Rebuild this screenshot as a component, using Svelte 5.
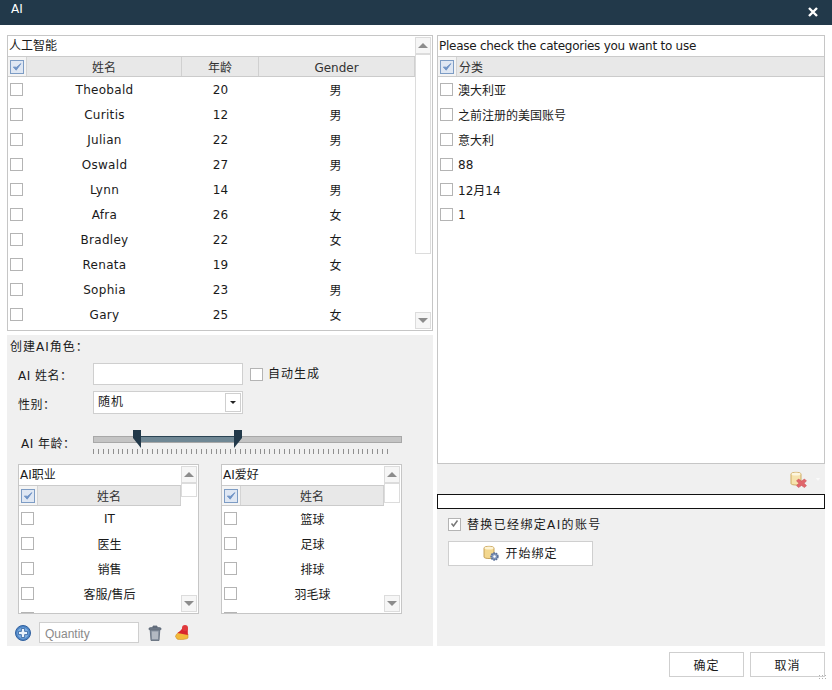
<script>
  const people = [
    ['Theobald', 20, '男'], ['Curitis', 12, '男'], ['Julian', 22, '男'], ['Oswald', 27, '男'], ['Lynn', 14, '男'],
    ['Afra', 26, '女'], ['Bradley', 22, '女'], ['Renata', 19, '女'], ['Sophia', 23, '男'], ['Gary', 25, '女']
  ];
  const categories = ['澳大利亚', '之前注册的美国账号', '意大利', '88', '12月14', '1'];
  const jobs = ['IT', '医生', '销售', '客服/售后', '市场/营销'];
  const hobbies = ['篮球', '足球', '排球', '羽毛球', '棒球'];
</script>

{#snippet check(on = false)}
  <span class="cb" class:on>
    {#if on}
      <svg width="10" height="10" viewBox="0 0 11 11"><path d="M1.5 5.5 L4.6 9 L9.8 1.8 L5 5.8 Z" fill="#6f93c6" stroke="#6f93c6" stroke-width="1" stroke-linejoin="round"/></svg>
    {/if}
  </span>
{/snippet}

{#snippet scrollbar(thumb)}
  <div class="sb">
    <div class="sb-btn"><i class="up"></i></div>
    <div class="thumb" style="height:{thumb}px"></div>
    <div class="sb-fill"></div>
    <div class="sb-btn"><i class="down"></i></div>
  </div>
{/snippet}

{#snippet smallGrid(title, items, thumb)}
  <div class="grid small">
    <div class="grid-main">
      <div class="grid-title">{title}</div>
      <div class="head">
        <div class="ck-cell">{@render check(true)}</div>
        <div class="hc grow">姓名</div>
      </div>
      {#each items as item}
        <div class="row">
          <div class="ck-cell">{@render check()}</div>
          <div class="cell grow">{item}</div>
        </div>
      {/each}
    </div>
    {@render scrollbar(thumb)}
  </div>
{/snippet}

<div class="window">
  <header class="titlebar">
    <span class="title">AI</span>
    <svg class="close" width="10" height="10" viewBox="0 0 10 10"><path d="M1 1 L9 9 M9 1 L1 9" stroke="#fff" stroke-width="2.4"/></svg>
  </header>

  <div class="content">
    <div class="left">
      <div class="grid main">
        <div class="grid-main">
          <div class="grid-title">人工智能</div>
          <div class="head">
            <div class="ck-cell">{@render check(true)}</div>
            <div class="hc c-name">姓名</div>
            <div class="hc c-age">年龄</div>
            <div class="hc grow">Gender</div>
          </div>
          {#each people as p}
            <div class="row">
              <div class="ck-cell">{@render check()}</div>
              <div class="cell c-name">{p[0]}</div>
              <div class="cell c-age">{p[1]}</div>
              <div class="cell grow c-gender">{p[2]}</div>
            </div>
          {/each}
        </div>
        {@render scrollbar(200)}
      </div>

      <section class="create">
        <div class="create-title">创建AI角色：</div>
        <div class="form-row name-row">
          <label for="ai-name" class="lbl">AI 姓名：</label>
          <input id="ai-name" class="text" type="text" />
          {@render check()}
          <span class="auto">自动生成</span>
        </div>
        <div class="form-row gender-row">
          <span class="lbl gender-lbl">性别：</span>
          <div class="select">
            <span>随机</span>
            <div class="drop"><i></i></div>
          </div>
        </div>
        <div class="form-row age-row">
          <span class="lbl age-lbl">AI 年龄：</span>
          <div class="slider">
            <div class="track"><div class="range"></div></div>
            <svg class="knob k1" width="8" height="18" viewBox="0 0 8 18"><path d="M0 0 H8 V18 L0 8 Z" fill="#22394a"/></svg>
            <svg class="knob k2" width="8" height="18" viewBox="0 0 8 18"><path d="M0 0 H8 V8 L0 18 Z" fill="#22394a"/></svg>
            <div class="ticks"></div>
          </div>
        </div>
        <div class="pair">
          {@render smallGrid('AI职业', jobs, 14)}
          {@render smallGrid('AI爱好', hobbies, 20)}
        </div>
        <div class="tools">
          <svg width="16" height="16" viewBox="0 0 16 16">
            <circle cx="8" cy="8" r="7.5" fill="#4f86c6" stroke="#2f5f9e"/>
            <circle cx="8" cy="8" r="5.6" fill="#7fb0e2"/>
            <path d="M6.4 3.5 H9.6 V6.4 H12.5 V9.6 H9.6 V12.5 H6.4 V9.6 H3.5 V6.4 H6.4 Z" fill="#eaf3fc" stroke="#2f5f9e" stroke-width="0.8"/>
          </svg>
          <input class="qty" type="text" placeholder="Quantity" />
          <svg class="trash" width="14" height="16" viewBox="0 0 14 16">
            <path d="M1 3.2 C3 2 11 2 13 3.2 V4.6 H1 Z M5 2.6 V1 H9 V2.6" fill="#6c7685" stroke="#5b6675" stroke-width="0.8"/>
            <path d="M2.2 5 H11.8 L11 15.5 H3 Z" fill="#8a94a2" stroke="#5b6675" stroke-width="0.8"/>
            <path d="M5 6.5 V14 M7 6.5 V14 M9 6.5 V14" stroke="#e4e7ea" stroke-width="0.9"/>
          </svg>
          <svg class="broom" width="14" height="15" viewBox="0 0 14 15">
            <path d="M0.5 11.5 C1 9 3 7.5 5 7 L13 9 V13 C12 14.5 4 15 2 14 Z" fill="#f3b93a" stroke="#cf9126" stroke-width="0.6"/>
            <path d="M2.5 8 C5 6.5 6.5 4.5 7.5 3 L12.8 3.5 L12.8 10 Z" fill="#d8262c"/>
            <circle cx="10" cy="3" r="3" fill="#e0393c"/>
          </svg>
        </div>
      </section>
    </div>

    <div class="right">
      <div class="grid wide">
        <div class="grid-main">
          <div class="grid-title">Please check the categories you want to use</div>
          <div class="head">
            <div class="ck-cell">{@render check(true)}</div>
            <div class="hc grow al">分类</div>
          </div>
          {#each categories as c}
            <div class="row">
              <div class="ck-cell">{@render check()}</div>
              <div class="cell grow al">{c}</div>
            </div>
          {/each}
        </div>
      </div>

      <section class="bind">
        <div class="bind-tools">
          <svg width="17" height="17" viewBox="0 0 17 17">
            <path d="M1 3 C1 0.8 11 0.8 11 3 V12.5 C11 14.5 1 14.5 1 12.5 Z" fill="#f6e3ae" stroke="#c9a55a" stroke-width="0.9"/>
            <ellipse cx="6" cy="3" rx="4.5" ry="1.5" fill="#fdf6df"/>
            <path d="M8.5 8 L11.5 10 L14.5 8 L16.5 10 L14 12.3 L16.5 14.6 L14.5 16.6 L11.5 14.5 L8.5 16.6 L6.5 14.6 L9 12.3 L6.5 10 Z" fill="#e0666c" stroke="#c9484e" stroke-width="0.5"/>
          </svg>
          <i class="more"></i>
        </div>
        <div class="progress"></div>
        <div class="replace">
          {@render check()}
          <svg class="tick" width="9" height="9" viewBox="0 0 9 9"><path d="M1.5 4.5 L3.5 7 L7.5 1.5" fill="none" stroke="#777" stroke-width="1.5"/></svg>
          <span class="replace-text">替换已经绑定AI的账号</span>
        </div>
        <button class="start">
          <svg width="16" height="16" viewBox="0 0 16 16">
            <path d="M1 3 C1 0.8 11 0.8 11 3 V12 C11 14 1 14 1 12 Z" fill="#f3d78e" stroke="#bf9a4e" stroke-width="0.9"/>
            <ellipse cx="6" cy="3" rx="4.5" ry="1.5" fill="#fdf3d4"/>
            <circle cx="11.5" cy="11.5" r="3.4" fill="#8197bd" stroke="#5b7199" stroke-width="1.6" stroke-dasharray="1.6 0.8"/>
            <circle cx="11.5" cy="11.5" r="1.2" fill="#fff"/>
          </svg>
          <span>开始绑定</span>
        </button>
      </section>
    </div>
  </div>

  <footer class="footer">
    <button class="foot-btn">确定</button>
    <button class="foot-btn">取消</button>
    <div class="grip"></div>
  </footer>
</div>

<style>
  :global(body) {
    margin: 0;
    background: #fff;
    font-family: "DejaVu Sans", "Noto Sans CJK SC", sans-serif;
    font-size: 12px;
    color: #1a1a1a;
  }

  .window {
    width: 832px;
    height: 690px;
    display: flex;
    flex-direction: column;
    overflow: hidden;
  }

  .titlebar {
    height: 25px;
    flex: none;
    background: #22394a;
    color: #fff;
    display: flex;
    justify-content: space-between;
    padding: 3px 14px 0 11px;
    box-sizing: border-box;
    line-height: 13px;
  }

  .close {
    margin-top: 4px;
  }

  .content {
    display: flex;
    gap: 4px;
    padding: 10px 7px 0;
    height: 611px;
    flex: none;
  }

  .left {
    width: 426px;
    display: flex;
    flex-direction: column;
    gap: 4px;
  }

  .right {
    width: 388px;
    display: flex;
    flex-direction: column;
  }

  /* grids */
  .grid {
    display: flex;
    border: 1px solid #c6c6c6;
    background: #fff;
    box-sizing: border-box;
    overflow: hidden;
  }

  .grid.main {
    height: 296px;
  }

  .grid.wide {
    height: 429px;
  }

  .grid.small {
    width: 181px;
    height: 150px;
  }

  .grid-main {
    flex: 1;
    min-width: 0;
  }

  .grid-title {
    height: 20px;
    line-height: 20px;
    padding-left: 1px;
  }

  .wide .grid-title {
    letter-spacing: -0.26px;
  }

  .head {
    display: flex;
    height: 21px;
    box-sizing: border-box;
    border-top: 1px solid #cbcbcb;
    border-bottom: 1px solid #cbcbcb;
    background: #e8e8e8;
    color: #333;
  }

  .head .ck-cell {
    background: #f4f4f4;
    border-right: 1px solid #d4d4d4;
    box-sizing: border-box;
  }

  .hc {
    line-height: 23px;
    text-align: center;
    box-sizing: border-box;
    border-right: 1px solid #d0d0d0;
  }

  .row {
    display: flex;
    height: 25px;
    align-items: center;
  }

  .ck-cell {
    width: 19px;
    flex: none;
    display: flex;
    align-items: center;
    padding-left: 2px;
    box-sizing: border-box;
  }

  .cell {
    text-align: center;
  }

  .c-name {
    width: 155px;
    flex: none;
  }

  .cell.c-name {
    letter-spacing: 0.3px;
  }

  .c-age {
    width: 77px;
    flex: none;
  }

  .c-gender {
    padding-right: 3px;
  }

  .grow {
    flex: 1;
  }

  .al {
    text-align: left;
    padding-left: 1px;
    border-right: 0;
  }

  .head .al {
    padding-left: 2px;
  }

  .cb {
    width: 13px;
    height: 13px;
    flex: none;
    box-sizing: border-box;
    border: 1px solid #b4b4b4;
    background: #fff;
    display: inline-flex;
    align-items: center;
    justify-content: center;
  }

  .cb.on {
    border-color: #7d9cc4;
    background: #dfe7f3;
    width: 14px;
    height: 14px;
  }

  /* scrollbar */
  .sb {
    width: 16px;
    flex: none;
    margin-right: 1px;
    padding: 1px 0;
    display: flex;
    flex-direction: column;
    box-sizing: border-box;
  }

  .sb-btn {
    height: 17px;
    flex: none;
    box-sizing: border-box;
    border: 1px solid #dcdcdc;
    background: #f6f6f6;
    display: flex;
    align-items: center;
    justify-content: center;
  }

  .sb-btn i {
    width: 0;
    height: 0;
    border-left: 5px solid transparent;
    border-right: 5px solid transparent;
  }

  .up {
    border-bottom: 5px solid #8c8c8c;
  }

  .down {
    border-top: 5px solid #8c8c8c;
  }

  .thumb {
    flex: none;
    box-sizing: border-box;
    border: 1px solid #dcdcdc;
    background: #fff;
  }

  .sb-fill {
    flex: 1;
  }

  /* create panel */
  .create {
    flex: 1;
    background: #f0f0f0;
    padding-left: 3px;
  }

  .create-title {
    height: 22px;
    line-height: 24px;
    letter-spacing: 1px;
  }

  .form-row {
    display: flex;
    align-items: center;
  }

  .lbl {
    width: 83px;
    padding-left: 8px;
    box-sizing: border-box;
    flex: none;
    letter-spacing: 0.5px;
  }

  .name-row {
    margin-top: 6px;
    height: 22px;
  }

  .text {
    width: 150px;
    height: 22px;
    box-sizing: border-box;
    border: 1px solid #cfcfcf;
    background: #fff;
    margin: 0 7px 0 0;
    padding: 0 4px;
  }

  .auto {
    margin-left: 5px;
    letter-spacing: 1px;
    margin-top: -4px;
  }

  .gender-row {
    margin-top: 6px;
    height: 23px;
  }

  .gender-lbl {
    margin-top: 2px;
  }

  .select {
    width: 150px;
    height: 23px;
    box-sizing: border-box;
    border: 1px solid #cfcfcf;
    background: #fff;
    display: flex;
    justify-content: space-between;
    padding-left: 4px;
    line-height: 20px;
    letter-spacing: 1px;
  }

  .drop {
    width: 16px;
    margin: 1px;
    box-sizing: border-box;
    border: 1px solid #cfcfcf;
    display: flex;
    align-items: center;
    justify-content: center;
  }

  .drop i {
    width: 0;
    height: 0;
    border-left: 3px solid transparent;
    border-right: 3px solid transparent;
    border-top: 3px solid #222;
  }

  .age-row {
    margin-top: 16px;
    height: 24px;
    align-items: flex-start;
  }

  .age-lbl {
    padding-left: 11px;
    margin-top: 4px;
  }

  .slider {
    position: relative;
    width: 309px;
    height: 24px;
  }

  .track {
    position: absolute;
    left: 0;
    right: 0;
    top: 6px;
    height: 7px;
    box-sizing: border-box;
    border: 1px solid #a8a8a8;
    background: #c4c4c4;
  }

  .range {
    margin-left: 43px;
    width: 98px;
    height: 100%;
    background: #6f8794;
    box-shadow: 0 -1px 0 #2b4454;
  }

  .knob {
    position: absolute;
    top: 0;
  }

  .k1 {
    left: 40px;
  }

  .k2 {
    left: 141px;
  }

  .ticks {
    position: absolute;
    left: 0;
    top: 19px;
    width: 297px;
    height: 5px;
    background: repeating-linear-gradient(90deg, #8f8f8f 0 1px, transparent 1px 4.9px);
  }

  .pair {
    display: flex;
    gap: 22px;
    margin: 10px 0 0 8px;
  }

  .tools {
    display: flex;
    align-items: center;
    height: 21px;
    margin-top: 8px;
    padding-left: 5px;
  }

  .qty {
    width: 100px;
    height: 21px;
    box-sizing: border-box;
    border: 1px solid #cfcfcf;
    background: #fff;
    margin: 0 0 0 8px;
    padding: 2px 5px 0;
    font: 12px "Liberation Sans", sans-serif;
    color: #888;
  }

  .qty::placeholder {
    color: #8a8a8a;
    opacity: 1;
  }

  .trash {
    margin-left: 9px;
  }

  .broom {
    margin-left: 13px;
  }

  /* bind panel */
  .bind {
    flex: 1;
    background: #f0f0f0;
    position: relative;
  }

  .bind-tools {
    height: 30px;
    display: flex;
    align-items: center;
    justify-content: flex-end;
    padding-right: 5px;
    box-sizing: border-box;
    gap: 9px;
  }

  .more {
    width: 0;
    height: 0;
    border-left: 2px solid transparent;
    border-right: 2px solid transparent;
    border-top: 3px solid #fafafa;
  }

  .progress {
    height: 15px;
    box-sizing: border-box;
    border: 1px solid #111;
    background: #fff;
  }

  .replace {
    position: relative;
    display: flex;
    align-items: center;
    height: 30px;
    padding-left: 11px;
    gap: 6px;
  }

  .replace-text {
    letter-spacing: 1.35px;
    margin-top: -2px;
  }

  .tick {
    position: absolute;
    left: 13px;
    top: 10px;
  }

  .start {
    margin: 2px 0 0 11px;
    width: 145px;
    height: 25px;
    box-sizing: border-box;
    border: 1px solid #cfcfcf;
    background: #fff;
    font: inherit;
    color: inherit;
    letter-spacing: 1px;
    display: flex;
    align-items: center;
    justify-content: center;
    gap: 6px;
    padding: 0 0 2px;
  }

  /* footer */
  .footer {
    position: relative;
    display: flex;
    justify-content: flex-end;
    gap: 6px;
    padding: 6px 7px 0;
  }

  .foot-btn {
    width: 75px;
    height: 25px;
    box-sizing: border-box;
    border: 1px solid #cfcfcf;
    background: #fff;
    font: inherit;
    color: inherit;
    letter-spacing: 1px;
    padding: 0;
  }

  .grip {
    position: absolute;
    right: 6px;
    top: 28px;
    width: 8px;
    height: 7px;
    background: radial-gradient(circle, #b0b0b0 0.7px, transparent 0.8px) 0 0 / 3px 3px;
  }
</style>
